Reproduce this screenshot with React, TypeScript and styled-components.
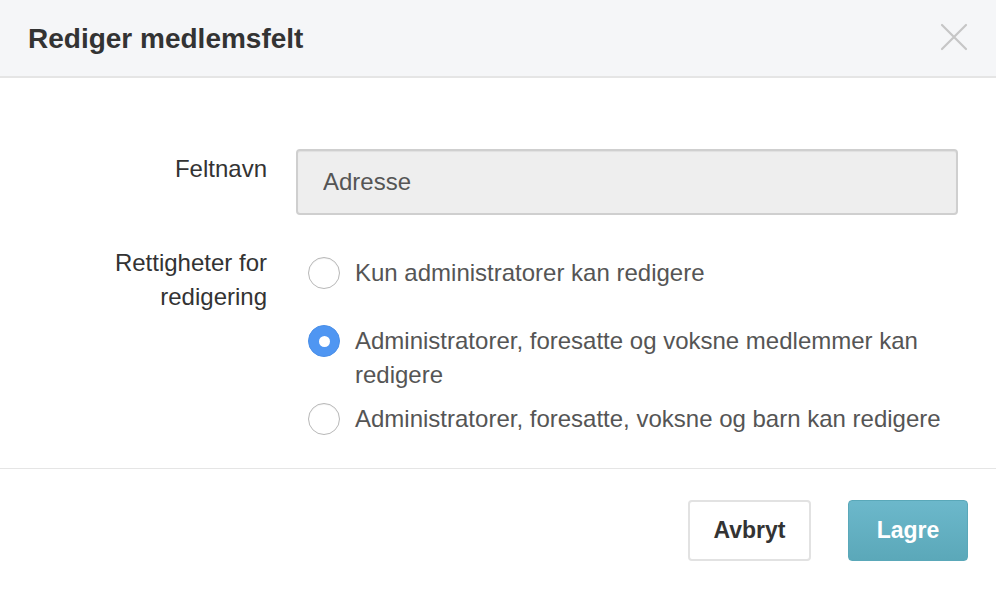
import React from "react";
import styled, { createGlobalStyle } from "styled-components";

const Global = createGlobalStyle`
  html, body { margin: 0; padding: 0; background: #fff; }
  body { font-family: "Liberation Sans", Arial, Helvetica, sans-serif; }
  * { box-sizing: border-box; }
`;

const Modal = styled.div`
  width: 996px;
  height: 590px;
  display: flex;
  flex-direction: column;
  background: #fff;
  overflow: hidden;
`;

const Header = styled.div`
  height: 78px;
  flex: none;
  display: flex;
  align-items: center;
  justify-content: space-between;
  padding: 0 26px 0 28px;
  background: #f5f6f8;
  border-bottom: 2px solid #e5e5e5;
`;

const Title = styled.h4`
  margin: 0;
  font-size: 28px;
  font-weight: 700;
  color: #333;
  line-height: 1;
  padding-top: 2px;
`;

const CloseButton = styled.button`
  width: 32px;
  height: 32px;
  padding: 0;
  border: 0;
  background: transparent;
  display: flex;
  align-items: center;
  justify-content: center;
  cursor: pointer;
  margin-top: -2px;
`;

const Body = styled.div`
  flex: 1;
  display: flex;
  flex-direction: column;
  gap: 31px;
  padding: 71px 38px 0 0;
  border-bottom: 1px solid #e5e5e5;
`;

const FormRow = styled.div`
  display: grid;
  grid-template-columns: 267px 1fr;
  column-gap: 29px;
  align-items: start;
`;

const Label = styled.label<{ $top: number }>`
  text-align: right;
  font-size: 24px;
  line-height: 34px;
  color: #333;
  padding-top: ${(p) => p.$top}px;
`;

const Input = styled.input`
  width: 100%;
  height: 66px;
  padding: 0 25px;
  font-family: inherit;
  font-size: 24px;
  color: #555;
  background: #eeeeee;
  border: 2px solid #cfcfcf;
  border-radius: 4px;
  box-shadow: inset 0 1px 1px rgba(0, 0, 0, 0.06);
  outline: none;
`;

const RadioList = styled.div`
  display: flex;
  flex-direction: column;
  padding-top: 10px;
`;

const RadioItem = styled.label<{ $after: number }>`
  display: flex;
  align-items: flex-start;
  gap: 15px;
  padding-left: 12px;
  margin-bottom: ${(p) => p.$after}px;
  font-size: 24px;
  line-height: 34px;
  color: #555;
  cursor: pointer;
`;

const Circle = styled.span<{ $checked: boolean }>`
  flex: none;
  width: 32px;
  height: 32px;
  margin-top: 1px;
  border-radius: 50%;
  display: flex;
  align-items: center;
  justify-content: center;
  background: ${(p) => (p.$checked ? "#4f96f2" : "#fff")};
  border: 1px solid ${(p) => (p.$checked ? "#4a8fe8" : "#b8b8b8")};
  box-shadow: ${(p) => (p.$checked ? "none" : "inset 0 1px 1px rgba(0,0,0,0.05)")};
  &::after {
    content: "";
    display: ${(p) => (p.$checked ? "block" : "none")};
    width: 11px;
    height: 11px;
    border-radius: 50%;
    background: #fff;
  }
`;

const Footer = styled.div`
  flex: none;
  height: 121px;
  display: flex;
  justify-content: flex-end;
  align-items: flex-start;
  gap: 37px;
  padding: 31px 28px 0 0;
`;

const Button = styled.button<{ $primary?: boolean; $w: number }>`
  width: ${(p) => p.$w}px;
  height: 61px;
  font-family: inherit;
  font-size: 23px;
  font-weight: 700;
  border-radius: 4px;
  cursor: pointer;
  color: ${(p) => (p.$primary ? "#fff" : "#333")};
  background: ${(p) =>
    p.$primary ? "linear-gradient(#6cb8cb, #5ba8b9)" : "#fff"};
  border: ${(p) => (p.$primary ? "1px solid #5aa8b9" : "2px solid #e2e2e2")};
`;

const options = [
  { text: "Kun administratorer kan redigere", checked: false, after: 34 },
  {
    text: "Administratorer, foresatte og voksne medlemmer kan redigere",
    checked: true,
    after: 10,
  },
  {
    text: "Administratorer, foresatte, voksne og barn kan redigere",
    checked: false,
    after: 0,
  },
];

export default function App() {
  return (
    <>
      <Global />
      <Modal>
        <Header>
          <Title>Rediger medlemsfelt</Title>
          <CloseButton aria-label="Lukk">
            <svg width="28" height="28" viewBox="0 0 28 28">
              <path
                d="M2 2 L26 26 M26 2 L2 26"
                stroke="#c6c6c6"
                strokeWidth="2.2"
                strokeLinecap="round"
              />
            </svg>
          </CloseButton>
        </Header>
        <Body>
          <FormRow>
            <Label $top={3}>Feltnavn</Label>
            <Input defaultValue="Adresse" readOnly />
          </FormRow>
          <FormRow>
            <Label $top={0}>
              Rettigheter for
              <br />
              redigering
            </Label>
            <RadioList>
              {options.map((o) => (
                <RadioItem key={o.text} $after={o.after}>
                  <Circle $checked={o.checked} />
                  <span>{o.text}</span>
                </RadioItem>
              ))}
            </RadioList>
          </FormRow>
        </Body>
        <Footer>
          <Button $w={123}>Avbryt</Button>
          <Button $primary $w={120}>
            Lagre
          </Button>
        </Footer>
      </Modal>
    </>
  );
}
